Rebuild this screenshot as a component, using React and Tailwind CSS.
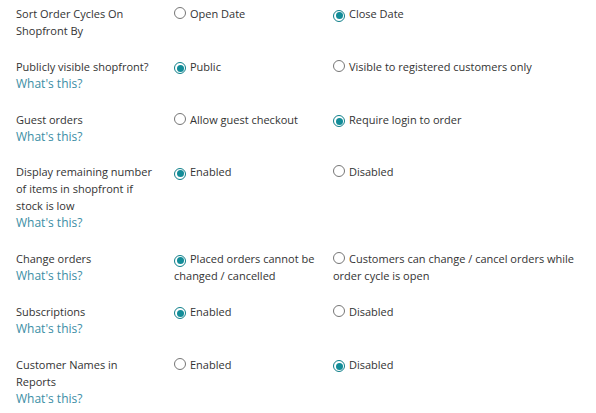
import React from 'react';

const rows = [
  { label: ['Sort Order Cycles On Shopfront By'], help: false, options: ['Open Date', 'Close Date'], checked: 1 },
  { label: ['Publicly visible shopfront?'], help: true, options: ['Public', 'Visible to registered customers only'], checked: 0 },
  { label: ['Guest orders'], help: true, options: ['Allow guest checkout', 'Require login to order'], checked: 1 },
  {
    label: ['Display remaining number of items in shopfront if stock is low'],
    help: true,
    options: ['Enabled', 'Disabled'],
    checked: 0,
  },
  {
    label: ['Change orders'],
    help: true,
    options: ['Placed orders cannot be changed / cancelled', 'Customers can change / cancel orders while order cycle is open'],
    checked: 0,
  },
  { label: ['Subscriptions'], help: true, options: ['Enabled', 'Disabled'], checked: 0 },
  { label: ['Customer Names in Reports'], help: true, options: ['Enabled', 'Disabled'], checked: 1 },
];

const Radio = ({ on }) =>
  on ? (
    <span className="inline-flex w-3 h-3 mr-[4px] rounded-full border border-[#0f7f8a] items-center justify-center align-[-1px] bg-white">
      <span className="w-[7px] h-[7px] rounded-full bg-[#128c98]"></span>
    </span>
  ) : (
    <span className="inline-block w-3 h-3 mr-[4px] rounded-full border border-[#767676] align-[-1px] bg-white"></span>
  );

export default function App() {
  return (
    <div
      className="w-[596px] h-[413px] bg-white text-[#333] text-[11px] leading-[17px] pl-4 pt-[5px] pr-1 overflow-hidden"
      style={{ fontFamily: '"Open Sans", "Liberation Sans", sans-serif' }}
    >
      {rows.map((row, i) => (
        <div key={i} className="grid grid-cols-[158px_159px_1fr] mb-[18.8px]">
          <div className="pr-4">
            {row.label.map((l, j) => (
              <div key={j}>{l}</div>
            ))}
            {row.help && <div className="text-[#3b8ea5] text-[12px]">What's this?</div>}
          </div>
          {row.options.map((opt, k) => (
            <div key={k} className={k === 0 ? 'pr-2' : ''}>
              <Radio on={row.checked === k} />
              {opt}
            </div>
          ))}
        </div>
      ))}
    </div>
  );
}
